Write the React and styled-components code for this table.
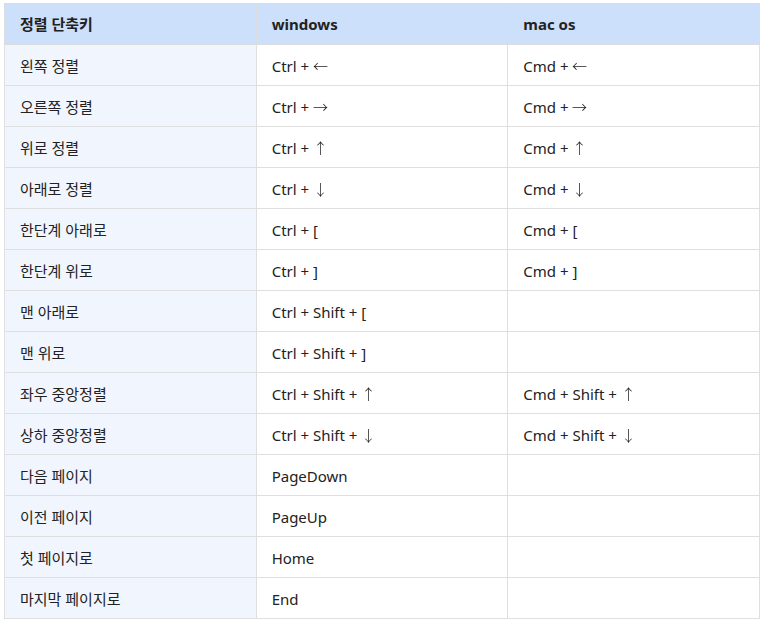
import React from "react";
import styled, { createGlobalStyle } from "styled-components";

const GlobalStyle = createGlobalStyle`
  body {
    margin: 0;
    background: #ffffff;
    font-family: "Noto Sans", "Noto Sans CJK KR", sans-serif;
  }
`;

const rows = [
  ["왼쪽 정렬", "Ctrl + ←", "Cmd + ←"],
  ["오른쪽 정렬", "Ctrl + →", "Cmd + →"],
  ["위로 정렬", "Ctrl + ↑", "Cmd + ↑"],
  ["아래로 정렬", "Ctrl + ↓", "Cmd + ↓"],
  ["한단계 아래로", "Ctrl + [", "Cmd + ["],
  ["한단계 위로", "Ctrl + ]", "Cmd + ]"],
  ["맨 아래로", "Ctrl + Shift + [", ""],
  ["맨 위로", "Ctrl + Shift + ]", ""],
  ["좌우 중앙정렬", "Ctrl + Shift + ↑", "Cmd + Shift + ↑"],
  ["상하 중앙정렬", "Ctrl + Shift + ↓", "Cmd + Shift + ↓"],
  ["다음 페이지", "PageDown", ""],
  ["이전 페이지", "PageUp", ""],
  ["첫 페이지로", "Home", ""],
  ["마지막 페이지로", "End", ""],
];

// arrows come from the CJK face, like the thin ones in the original
const Keys = ({ text }) =>
  text.split(/([←→↑↓])/).map((part, i) =>
    /[←→↑↓]/.test(part) ? (
      <Arrow key={i}>{part}</Arrow>
    ) : (
      <React.Fragment key={i}>{part}</React.Fragment>
    )
  );

const App = () => {
  return (
    <>
      <GlobalStyle />
      <Table>
        <thead>
          <tr>
            <Th>정렬 단축키</Th>
            <Th>windows</Th>
            <Th>mac os</Th>
          </tr>
        </thead>
        <tbody>
          {rows.map((r) => (
            <tr key={r[0]}>
              <Td $label>{r[0]}</Td>
              <Td>
                <Keys text={r[1]} />
              </Td>
              <Td>
                <Keys text={r[2]} />
              </Td>
            </tr>
          ))}
        </tbody>
      </Table>
    </>
  );
};

export default App;

const Table = styled.table`
  margin: 3px 0 0 4px;
  width: 756px;
  border-collapse: collapse;
  table-layout: fixed;
  font-size: 15px;
  line-height: 20px;
  color: #222222;
`;

const Th = styled.th`
  height: 41px;
  box-sizing: border-box;
  padding: 0 15px;
  text-align: left;
  font-weight: 700;
  background: #cde0fb;
  border: 1px solid #dcdcdc;
`;

const Td = styled.td`
  height: 41px;
  box-sizing: border-box;
  padding: 1px 15px 0;
  border: 1px solid #dfdfdf;
  background: ${(p) => (p.$label ? "#f1f6fe" : "#ffffff")};
`;

const Arrow = styled.span`
  display: inline-block;
  font-family: "Noto Sans CJK KR", sans-serif;
  font-weight: 300;
  line-height: 20px;
  vertical-align: top;
  will-change: transform;
`;
